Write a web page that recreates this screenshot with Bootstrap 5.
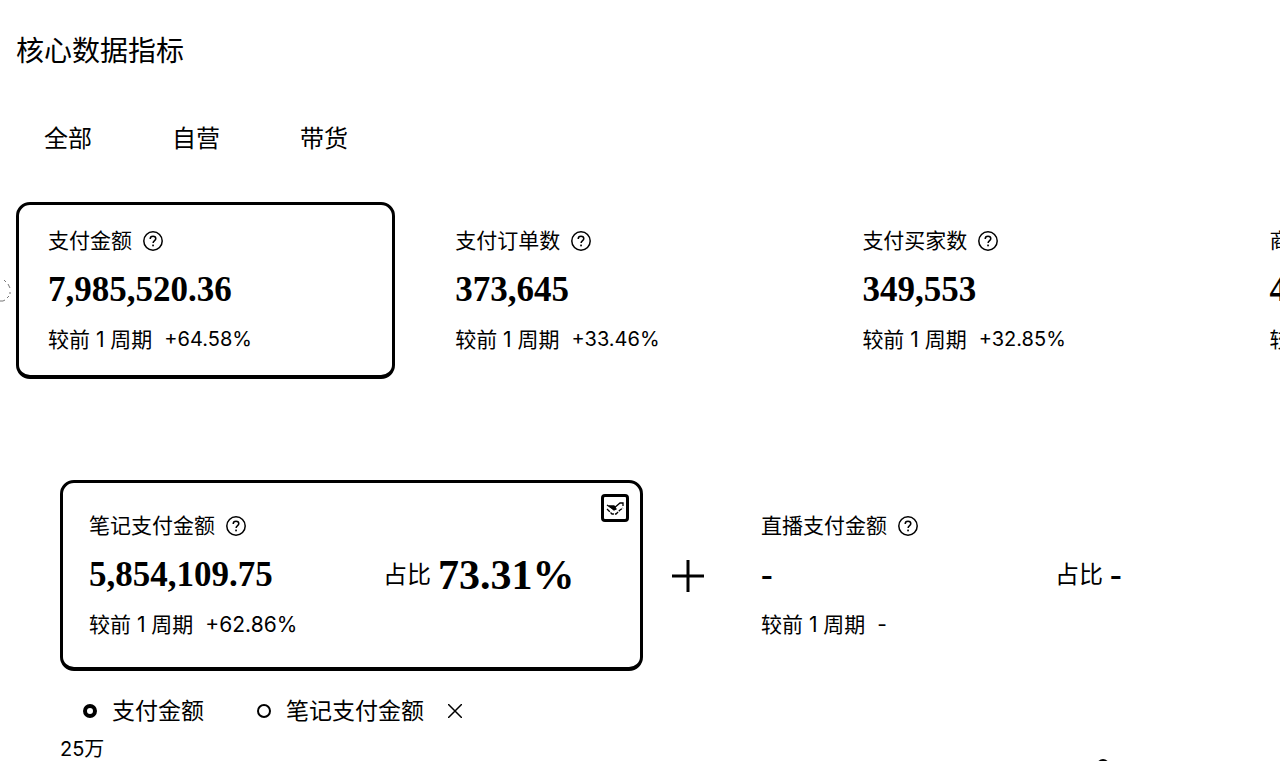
<!DOCTYPE html>
<html lang="zh-CN">
<head>
<meta charset="utf-8">
<meta name="viewport" content="width=device-width, initial-scale=1">
<title>核心数据指标</title>
<link href="https://cdn.jsdelivr.net/npm/bootstrap@5.3.0/dist/css/bootstrap.min.css" rel="stylesheet">
<style>
  body { font-family: Inter, "Noto Sans CJK SC", sans-serif; color: #000; background: #fff; }
  .page { height: 100vh; padding: 30px 0 0 16px; }
  .page-title { font-size: 28px; line-height: 42px; font-weight: 400; }
  .scope-tabs { margin-top: 47px; padding-left: 28px; gap: 80px; }
  .scope-tabs button { font-size: 24px; line-height: 40px; color: #000; }
  .metric-row { margin-top: 43px; gap: 28px; }
  .metric { flex: 0 0 30%; padding: 20px 29px; border: 3px solid transparent; border-bottom-width: 4px; border-radius: 14px; }
  .metric.active { border-color: #000; }
  .metric-label { font-size: 21px; line-height: 31px; gap: 11px; }
  .metric-value { font-family: "Liberation Serif", serif; font-weight: 700; font-size: 35px; line-height: 68px; }
  .metric-sub { font-size: 21px; line-height: 31px; gap: 12px; word-spacing: normal; }
  .metric-sub b { font-size: 20px; font-weight: 400; }
  .split-row { margin: 101px 0 0 44px; }
  .split-row .metric { flex: 0 0 calc(50% - 27px); padding: 27px 26px; }
  .split-row .metric-sub b { font-size: 21px; }
  .value-main { flex: 0 0 56%; }
  .share { font-size: 24px; gap: 7px; }
  .share .metric-value.big { font-size: 42px; }
  .plus { flex: 0 0 89px; }
  .pick { top: 11px; right: 11px; width: 28px; height: 28px; margin: 0; appearance: none; border: 3px solid #000; border-radius: 4px; }
  .pick:checked { background: url("data:image/svg+xml,%3Csvg xmlns='http://www.w3.org/2000/svg' viewBox='0 0 22 22' fill='none' stroke='%23000' stroke-width='1.3'%3E%3Cpath d='M3 8l3 2 3 2 7-6h3v3'/%3E%3Cpath d='M3 12l2 2 3 3h4l4-4 3-2' stroke-dasharray='4 1'/%3E%3Cpath d='M6 9l4 4 2-1-2-3z' fill='%23000'/%3E%3C/svg%3E") center / 22px no-repeat; }
  .prev { left: 0; top: 278px; width: 12px; height: 24px; }
  .legend-row { margin: 22px 0 0 67px; font-size: 23px; line-height: 36px; }
  .legend-entry { gap: 15px; }
  .legend-entry + .legend-entry { margin-left: 53px; }
  .plot { margin-left: 44px; height: 80px; font-size: 20px; line-height: 40px; }
  .plot-point { left: 85%; top: 30px; }
</style>
</head>
<body>
<svg class="d-none">
  <symbol id="help" viewBox="0 0 20 20"><g fill="none" stroke="#000" stroke-width="1.5"><circle cx="10" cy="10" r="9.2"/><path d="M7.2 8c0-1.700 1.200-2.700 2.800-2.700s2.800 1 2.800 2.500c0 1.800-2.700 2-2.700 4.200"/></g><rect x="9.200" y="13.600" width="1.700" height="1.700"/></symbol>
</svg>
<main class="page position-relative overflow-hidden">
  <h1 class="page-title m-0">核心数据指标</h1>
  <nav class="scope-tabs d-flex">
    <button type="button" class="btn p-0 border-0">全部</button>
    <button type="button" class="btn p-0 border-0">自营</button>
    <button type="button" class="btn p-0 border-0">带货</button>
  </nav>

  <button type="button" class="prev btn p-0 border-0 position-absolute d-flex" aria-label="上一页">
    <svg width="12" height="24" fill="none" stroke="#777"><path d="M4 2l2 2M8 6l2 4M10 14v2M9 18l-2 2M5 22l-2 1H0"/></svg>
  </button>

  <section class="metric-row d-flex overflow-hidden text-nowrap">
    <article class="metric active">
      <div class="metric-label d-flex align-items-center">支付金额<svg width="20" height="20"><use href="#help"/></svg></div>
      <div class="metric-value">7,985,520.36</div>
      <div class="metric-sub d-flex"><span>较前 1 周期</span><b>+64.58%</b></div>
    </article>
    <article class="metric">
      <div class="metric-label d-flex align-items-center">支付订单数<svg width="20" height="20"><use href="#help"/></svg></div>
      <div class="metric-value">373,645</div>
      <div class="metric-sub d-flex"><span>较前 1 周期</span><b>+33.46%</b></div>
    </article>
    <article class="metric">
      <div class="metric-label d-flex align-items-center">支付买家数<svg width="20" height="20"><use href="#help"/></svg></div>
      <div class="metric-value">349,553</div>
      <div class="metric-sub d-flex"><span>较前 1 周期</span><b>+32.85%</b></div>
    </article>
    <article class="metric">
      <div class="metric-label">商</div>
      <div class="metric-value">4</div>
      <div class="metric-sub">较</div>
    </article>
  </section>

  <section class="split-row d-flex overflow-hidden text-nowrap">
    <article class="metric active position-relative">
      <input class="pick position-absolute" type="checkbox" checked aria-label="笔记支付金额">
      <div class="metric-label d-flex align-items-center">笔记支付金额<svg width="20" height="20"><use href="#help"/></svg></div>
      <div class="d-flex align-items-center">
        <div class="metric-value value-main">5,854,109.75</div>
        <div class="share d-flex align-items-center">占比<span class="metric-value big">73.31%</span></div>
      </div>
      <div class="metric-sub d-flex"><span>较前 1 周期</span><b>+62.86%</b></div>
    </article>
    <div class="plus d-flex align-items-center justify-content-center">
      <svg width="32" height="32" stroke="#000" stroke-width="3"><path d="M0 16h32M16 0v32"/></svg>
    </div>
    <article class="metric">
      <div class="metric-label d-flex align-items-center">直播支付金额<svg width="20" height="20"><use href="#help"/></svg></div>
      <div class="d-flex align-items-center">
        <div class="metric-value value-main">-</div>
        <div class="share d-flex align-items-center">占比<span class="metric-value">-</span></div>
      </div>
      <div class="metric-sub d-flex"><span>较前 1 周期</span><b>-</b></div>
    </article>
  </section>

  <div class="legend-row d-flex align-items-center">
    <div class="legend-entry d-flex align-items-center">
      <svg width="14" height="14" fill="none" stroke="#000" stroke-width="4"><circle cx="7" cy="7" r="5"/></svg>支付金额
    </div>
    <div class="legend-entry d-flex align-items-center">
      <svg width="14" height="14" fill="none" stroke="#000" stroke-width="2"><circle cx="7" cy="7" r="6"/></svg>笔记支付金额
    </div>
    <button type="button" class="btn p-0 border-0 d-flex ms-4" aria-label="移除">
      <svg width="14" height="14" stroke="#000" stroke-width="1.500"><path d="M0 0l14 14M14 0L0 14"/></svg>
    </button>
  </div>
  <div class="plot position-relative">25万
    <svg class="plot-point position-absolute" width="12" height="12"><circle cx="6" cy="6" r="6"/></svg>
  </div>
</main>
<script src="https://cdn.jsdelivr.net/npm/bootstrap@5.3.0/dist/js/bootstrap.bundle.min.js"></script>
</body>
</html>
